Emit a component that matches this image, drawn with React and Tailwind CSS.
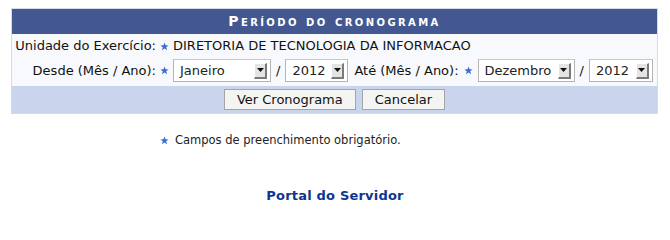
import { useState } from 'react'

const font = { fontFamily: '"DejaVu Sans", Verdana, sans-serif' }

function Star() {
  return (
    <svg width="9" height="9" viewBox="0 0 10 10" className="shrink-0">
      <path d="M5 0.5 L6.2 3.7 L9.6 3.8 L6.9 5.9 L7.9 9.3 L5 7.3 L2.1 9.3 L3.1 5.9 L0.4 3.8 L3.8 3.7 Z" fill="#3b6fd6" />
    </svg>
  )
}

function FakeSelect({ value, width }) {
  return (
    <div className={`flex items-center h-[23px] bg-white border border-[#b4b4b4] border-t-[#c8c8c8] shrink-0 ${width}`}>
      <span className="flex-1 pl-[6px] text-[13px] text-[#222] leading-none whitespace-nowrap">{value}</span>
      <span className="w-[13px] h-[16px] mr-[3px] shrink-0 flex items-center justify-center bg-[#e4e4e4] border-r-2 border-b-2 border-r-[#7a7a7a] border-b-[#7a7a7a] border-t border-l border-t-white border-l-white">
        <svg width="7" height="4" viewBox="0 0 7 4">
          <path d="M0 0 H7 L3.5 4 Z" fill="#111" />
        </svg>
      </span>
    </div>
  )
}

export default function App() {
  const [inicio] = useState({ mes: 'Janeiro', ano: '2012' })
  const [fim] = useState({ mes: 'Dezembro', ano: '2012' })

  return (
    <div className="w-[670px] h-[214px] overflow-hidden bg-white pt-[8px]" style={font}>
      <div className="ml-[11px] w-[647px] border border-[#d4dcea]">
        <div className="h-[25px] bg-[#435891] flex items-center justify-center text-white font-bold text-[14px] tracking-[2.4px] [font-variant:small-caps]">
          Período do cronograma
        </div>

        <div className="bg-[#f7f9fc] text-[13px] text-[#111]">
          <div className="flex items-center h-[23px] pt-[1px] whitespace-nowrap">
            <span className="w-[144px] text-right">Unidade do Exercício:</span>
            <span className="ml-[4px] mr-[4px]"><Star /></span>
            <span>DIRETORIA DE TECNOLOGIA DA INFORMACAO</span>
          </div>
          <div className="flex items-center h-[29px] pb-[2px] whitespace-nowrap">
            <span className="w-[144px] text-right">Desde (Mês / Ano):</span>
            <span className="ml-[4px] mr-[4px]"><Star /></span>
            <FakeSelect value={inicio.mes} width="w-[98px]" />
            <span className="mx-[5px]">/</span>
            <FakeSelect value={inicio.ano} width="w-[63px]" />
            <span className="ml-[6px]">Até (Mês / Ano):</span>
            <span className="ml-[5px] mr-[5px]"><Star /></span>
            <FakeSelect value={fim.mes} width="w-[97px]" />
            <span className="mx-[5px]">/</span>
            <FakeSelect value={fim.ano} width="w-[64px]" />
          </div>
        </div>

        <div className="h-[27px] bg-[#c9d5ec] flex items-center justify-center gap-[6px]">
          <button className="h-[21px] px-[12px] bg-[#f4f4f2] border border-[#a5a5a5] text-[13px] text-[#111] leading-none">
            Ver Cronograma
          </button>
          <button className="h-[21px] px-[12px] bg-[#f4f4f2] border border-[#a5a5a5] text-[13px] text-[#111] leading-none">
            Cancelar
          </button>
        </div>
      </div>

      <div className="mt-[18px] ml-[160px] flex items-center gap-[6px] text-[11.5px] text-[#222]">
        <Star />
        <span>Campos de preenchimento obrigatório.</span>
      </div>

      <div className="mt-[37px] text-center text-[13px] font-bold text-[#0d3591] tracking-[0.2px]">
        Portal do Servidor
      </div>
    </div>
  )
}
